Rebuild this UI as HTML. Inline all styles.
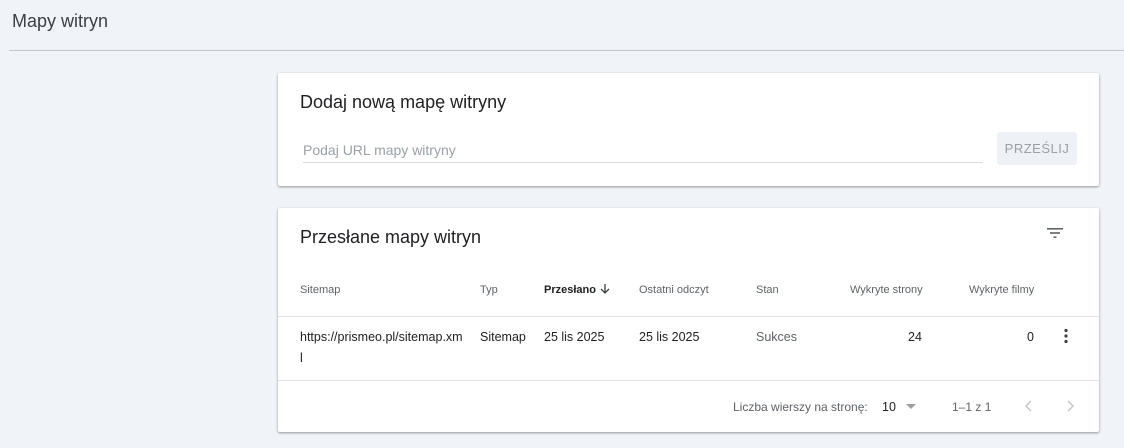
<!DOCTYPE html>
<html><head><meta charset="utf-8"><style>
*{margin:0;padding:0;box-sizing:border-box}
body{width:1124px;height:448px;background:#f0f3f8;font-family:"Liberation Sans",sans-serif;position:relative;overflow:hidden;color:#202124}
.a{position:absolute;white-space:nowrap}
.card{position:absolute;background:#fff;border-radius:2px;box-shadow:0 1px 2px rgba(0,0,0,.3),0 1px 3px rgba(0,0,0,.12)}
.h{font-size:11px;color:#5f6368}
.c{font-size:12.5px;color:#202124}
</style></head><body>
<div class="a" style="left:12px;top:11px;font-size:18px;color:#3c4043">Mapy witryn</div>
<div class="a" style="left:9px;top:50px;width:1115px;height:1px;background:#c4c7c9"></div>

<div class="card" style="left:278px;top:73px;width:821px;height:113px">
  <div class="a" style="left:22px;top:19px;font-size:18px;color:#202124">Dodaj nową mapę witryny</div>
  <div class="a" style="left:25px;top:69px;font-size:14px;color:#9aa0a6">Podaj URL mapy witryny</div>
  <div class="a" style="left:25px;top:89px;width:680px;height:1px;background:#dadce0"></div>
  <div class="a" style="left:719px;top:59px;width:80px;height:33px;background:#eef1f6;border-radius:3px;font-size:13px;color:#9aa0a6;text-align:center;line-height:33px;letter-spacing:.5px">PRZEŚLIJ</div>
</div>

<div class="card" style="left:278px;top:208px;width:821px;height:224px">
  <div class="a" style="left:22px;top:19px;font-size:18px;color:#202124">Przesłane mapy witryn</div>
  <svg class="a" style="left:768px;top:18px" width="18" height="14" viewBox="0 0 18 14"><rect x="1" y="2" width="16" height="1.6" fill="#5f6368"/><rect x="4" y="6.2" width="10" height="1.6" fill="#5f6368"/><rect x="7.5" y="10.4" width="3" height="1.6" fill="#5f6368"/></svg>
  <div class="a h" style="left:22px;top:76px">Sitemap</div>
  <div class="a h" style="left:202px;top:76px">Typ</div>
  <div class="a h" style="left:266px;top:76px;color:#202124;font-weight:bold">Przesłano</div>
  <svg class="a" style="left:321px;top:75px" width="12" height="12" viewBox="0 0 12 12"><path d="M6 1v9M2 6l4 4 4-4" stroke="#3c4043" stroke-width="1.3" fill="none"/></svg>
  <div class="a h" style="left:361px;top:76px">Ostatni odczyt</div>
  <div class="a h" style="left:478px;top:76px">Stan</div>
  <div class="a h" style="left:572px;top:76px">Wykryte strony</div>
  <div class="a h" style="left:691px;top:76px">Wykryte filmy</div>
  <div class="a" style="left:0;top:108px;width:821px;height:1px;background:#e0e0e0"></div>
  <div class="a c" style="left:22px;top:122px">https://prismeo.pl/sitemap.xm</div>
  <div class="a c" style="left:22px;top:143px">l</div>
  <div class="a c" style="left:202px;top:122px">Sitemap</div>
  <div class="a c" style="left:266px;top:122px">25 lis 2025</div>
  <div class="a c" style="left:361px;top:122px">25 lis 2025</div>
  <div class="a c" style="left:478px;top:122px;color:#5f6368">Sukces</div>
  <div class="a c" style="left:630px;top:122px">24</div>
  <div class="a c" style="left:749px;top:122px">0</div>
  <svg class="a" style="left:785px;top:120px" width="6" height="16" viewBox="0 0 6 16"><circle cx="3" cy="2.5" r="1.6" fill="#3c4043"/><circle cx="3" cy="8" r="1.6" fill="#3c4043"/><circle cx="3" cy="13.5" r="1.6" fill="#3c4043"/></svg>
  <div class="a" style="left:0;top:172px;width:821px;height:1px;background:#e0e0e0"></div>
  <div class="a" style="left:455px;top:192px;font-size:12px;color:#5f6368">Liczba wierszy na stronę:</div>
  <div class="a" style="left:604px;top:192px;font-size:12.5px;color:#202124">10</div>
  <svg class="a" style="left:628px;top:196px" width="10" height="6" viewBox="0 0 10 6"><path d="M0 0h10L5 5z" fill="#9aa0a6"/></svg>
  <div class="a" style="left:674px;top:192px;font-size:12px;color:#5f6368">1–1 z 1</div>
  <svg class="a" style="left:746px;top:191px" width="10" height="14" viewBox="0 0 10 14"><path d="M7 2L2 7l5 5" stroke="#c4c7c9" stroke-width="1.5" fill="none"/></svg>
  <svg class="a" style="left:787px;top:191px" width="10" height="14" viewBox="0 0 10 14"><path d="M3 2l5 5-5 5" stroke="#c4c7c9" stroke-width="1.5" fill="none"/></svg>
</div>
</body></html>
